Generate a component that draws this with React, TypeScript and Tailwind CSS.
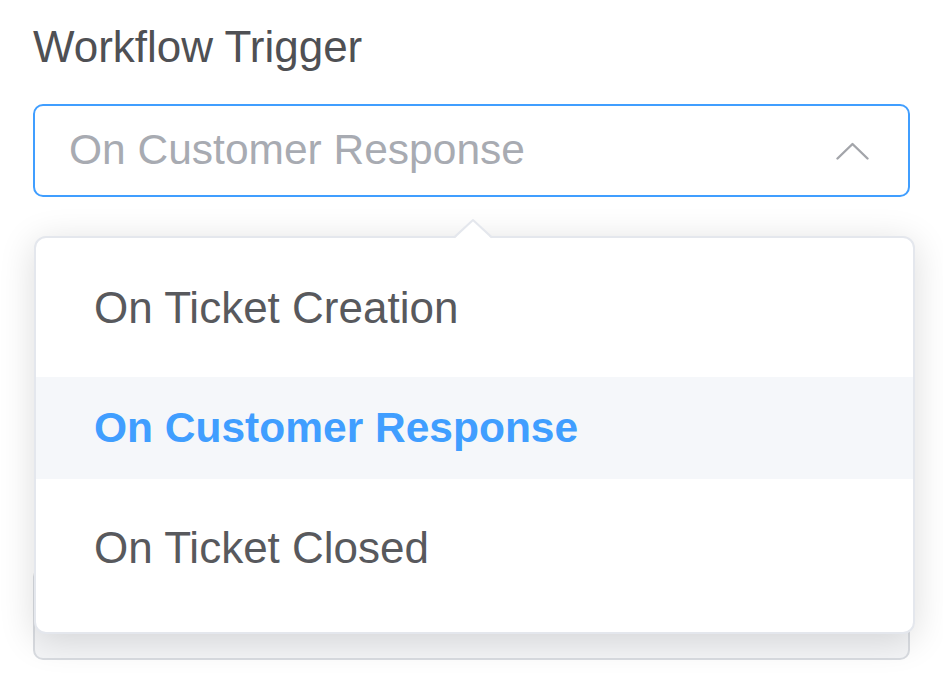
import { useState } from "react";

const options = ["On Ticket Creation", "On Customer Response", "On Ticket Closed"];

export default function App() {
  const [selected] = useState("On Customer Response");

  return (
    <div
      className="min-h-screen bg-white pl-[33px] pt-[23px]"
      style={{ fontFamily: '"Liberation Sans", Arial, sans-serif' }}
    >
      <div className="w-[877px]">
        <label className="block text-[44px] leading-[48px] text-[#4f5054]">
          Workflow Trigger
        </label>

        <div className="relative mt-[33px]">
          <div className="flex h-[93px] items-center justify-between rounded-[10px] border-2 border-[#409eff] bg-white pl-[34px] pr-[39px]">
            <span className="text-[42.5px] leading-none text-[#a8abb2]">
              {selected}
            </span>
            <svg width="33" height="18" viewBox="0 0 33 18" fill="none">
              <polyline
                points="1.5,16.5 16.5,2 31.5,16.5"
                stroke="#a3a5aa"
                strokeWidth="2.4"
                strokeLinecap="round"
                strokeLinejoin="round"
              />
            </svg>
          </div>

          <div className="absolute left-[1px] top-[132px] z-10 w-[881px] rounded-[12px] border-2 border-[#e4e7ed] bg-white pb-[33px] pt-[19px] shadow-[0_6px_36px_rgba(0,0,0,0.14)]">
            <svg
              className="absolute left-[417px] top-[-20px]"
              width="40"
              height="22"
              viewBox="0 0 40 22"
              fill="none"
            >
              <polygon points="1,21 20,3 39,21" fill="#ffffff" />
              <polyline
                points="1,19.5 20,2 39,19.5"
                stroke="#e4e7ed"
                strokeWidth="2"
                strokeLinejoin="round"
              />
            </svg>
            <ul className="flex flex-col gap-[18px]">
              {options.map((opt) => (
                <li
                  key={opt}
                  className={
                    opt === selected
                      ? "flex h-[102px] items-center bg-[#f5f7fa] pl-[58px] text-[42.5px] font-bold text-[#409eff]"
                      : "flex h-[102px] items-center pl-[58px] text-[44px] text-[#58595d]"
                  }
                >
                  {opt}
                </li>
              ))}
            </ul>
          </div>
        </div>

        <div className="mt-[370px] h-[93px] rounded-[10px] border-2 border-[#d9dce1] bg-[#f4f5f7]" />
      </div>
    </div>
  );
}
